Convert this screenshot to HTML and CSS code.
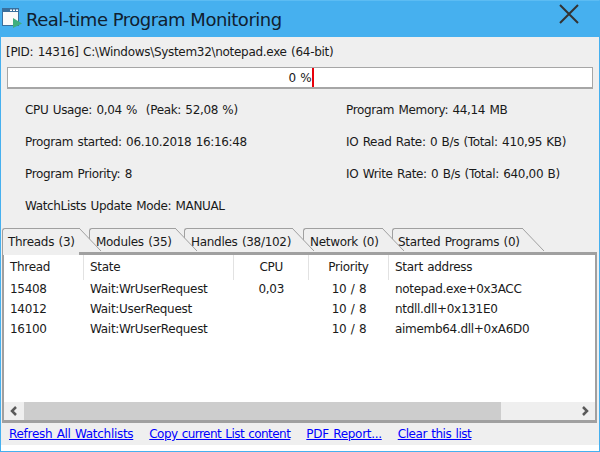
FILE: index.html
```html
<!DOCTYPE html>
<html lang="en">
<head>
<meta charset="utf-8">
<title>Real-time Program Monitoring</title>
<link rel="stylesheet" href="styles.css">
</head>
<body>
<div class="window">
  <header class="titlebar">
    <svg class="app-icon" width="22" height="22" viewBox="0 0 22 22">
      <rect x="1" y="0" width="17" height="18" fill="#3a6f9c"/>
      <rect x="2" y="4" width="15" height="13" fill="#fafafa"/>
      <rect x="9" y="1.500" width="2" height="1.500" fill="#fff"/>
      <rect x="12" y="1.500" width="2" height="1.500" fill="#fff"/>
      <rect x="15" y="1.500" width="2" height="1.500" fill="#fff"/>
      <path d="M12 10 L21 15.500 L12 20 Z" fill="#3fae7f"/>
    </svg>
    <h1 class="title">Real-time Program Monitoring</h1>
    <svg class="close" width="20" height="20" viewBox="0 0 20 20">
      <path d="M1 1 L19 19 M19 1 L1 19" stroke="#333" stroke-width="2" fill="none"/>
    </svg>
  </header>
  <main class="content">
    <div class="pid">[PID: 14316] C:\Windows\System32\notepad.exe (64-bit)</div>
    <div class="progress">
      <span>0 %</span>
      <i class="peak" style="left:52.08%"></i>
    </div>
    <div class="info">
      <div>CPU Usage: 0,04 %&nbsp; (Peak: 52,08 %)</div>
      <div>Program Memory: 44,14 MB</div>
      <div>Program started: 06.10.2018 16:16:48</div>
      <div>IO Read Rate: 0 B/s (Total: 410,95 KB)</div>
      <div>Program Priority: 8</div>
      <div>IO Write Rate: 0 B/s (Total: 640,00 B)</div>
      <div>WatchLists Update Mode: MANUAL</div>
    </div>
    <nav class="tabs">
      <div class="tab tab-threads"><span class="tab-label">Threads (3)</span><svg class="slant" width="22" height="24" viewBox="0 0 22 24"><path d="M0 0 L22 23 L22 24 L0 24 Z" fill="#efefef"/><path d="M0 0 L22 23" stroke="#a0a0a0" fill="none"/></svg></div>
      <div class="tab tab-modules"><span class="tab-label">Modules (35)</span><svg class="slant" width="22" height="24" viewBox="0 0 22 24"><path d="M0 0 L22 23 L22 24 L0 24 Z" fill="#efefef"/><path d="M0 0 L22 23" stroke="#a0a0a0" fill="none"/></svg></div>
      <div class="tab tab-handles"><span class="tab-label">Handles (38/102)</span><svg class="slant" width="22" height="24" viewBox="0 0 22 24"><path d="M0 0 L22 23 L22 24 L0 24 Z" fill="#efefef"/><path d="M0 0 L22 23" stroke="#a0a0a0" fill="none"/></svg></div>
      <div class="tab tab-network"><span class="tab-label">Network (0)</span><svg class="slant" width="22" height="24" viewBox="0 0 22 24"><path d="M0 0 L22 23 L22 24 L0 24 Z" fill="#efefef"/><path d="M0 0 L22 23" stroke="#a0a0a0" fill="none"/></svg></div>
      <div class="tab tab-started"><span class="tab-label">Started Programs (0)</span><svg class="slant" width="22" height="24" viewBox="0 0 22 24"><path d="M0 0 L22 23 L22 24 L0 24 Z" fill="#efefef"/><path d="M0 0 L22 23" stroke="#a0a0a0" fill="none"/></svg></div>
    </nav>
    <section class="panel">
      <div class="list">
        <div class="row head">
          <div class="c sep">Thread</div>
          <div class="c sep">State</div>
          <div class="c sep num">CPU</div>
          <div class="c sep mid">Priority</div>
          <div class="c">Start address</div>
        </div>
        <div class="row">
          <div class="c">15408</div><div class="c">Wait:WrUserRequest</div><div class="c num">0,03</div><div class="c mid">10 / 8</div><div class="c">notepad.exe+0x3ACC</div>
        </div>
        <div class="row">
          <div class="c">14012</div><div class="c">Wait:UserRequest</div><div class="c num"></div><div class="c mid">10 / 8</div><div class="c">ntdll.dll+0x131E0</div>
        </div>
        <div class="row">
          <div class="c">16100</div><div class="c">Wait:WrUserRequest</div><div class="c num"></div><div class="c mid">10 / 8</div><div class="c">aimemb64.dll+0xA6D0</div>
        </div>
      </div>
      <div class="scrollbar">
        <svg class="arrow" width="20" height="18" viewBox="0 0 20 18"><path d="M12 5 L8 9 L12 13" stroke="#5a5a5a" stroke-width="2.500" fill="none"/></svg>
        <div class="thumb"></div>
        <div class="track-rest"></div>
        <svg class="arrow" width="20" height="18" viewBox="0 0 20 18"><path d="M8 5 L12 9 L8 13" stroke="#5a5a5a" stroke-width="2.500" fill="none"/></svg>
      </div>
    </section>
    <div class="links">
      <a href="#">Refresh All Watchlists</a>
      <a class="link-tight" href="#">Copy current List content</a>
      <a href="#">PDF Report...</a>
      <a class="link-snug" href="#">Clear this list</a>
    </div>
    <div class="foot"></div>
  </main>
</div>
</body>
</html>
```
FILE: styles.css
```css
* { box-sizing: border-box; }
html, body { margin: 0; padding: 0; }
body {
  width: 600px;
  height: 452px;
  overflow: hidden;
  font-family: "DejaVu Sans", sans-serif;
  font-size: 12px;
  letter-spacing: -0.3px;
  word-spacing: 0.9px;
  color: #1a1a1a;
}
.window {
  width: 600px;
  height: 452px;
  display: flex;
  flex-direction: column;
  background: #46b0ef;
  border: 1px solid #46b0ef;
  border-top: 1px solid #5cbcf3;
}
.titlebar {
  height: 36px;
  flex: none;
  display: flex;
  align-items: flex-start;
  padding-left: 0;
}
.app-icon { margin-top: 7px; flex: none; }
.title {
  margin: 7px 0 0 3px;
  font-size: 18px;
  font-weight: 400;
  line-height: 24px;
  letter-spacing: -0.5px;
  word-spacing: 0;
  color: #102030;
}
.close { margin: 3px 20px 0 auto; flex: none; }
.content {
  flex: 1;
  display: flex;
  flex-direction: column;
  background: #efefef;
  min-height: 0;
}
.pid { height: 30px; line-height: 30px; padding-left: 5px; white-space: nowrap; }
.progress {
  position: relative;
  height: 22px;
  margin: 0 6px;
  background: #fff;
  border: 2px solid #a6a6a6;
  border-width: 1px 1px 2px 1px;
  text-align: center;
  line-height: 20px;
}
.peak {
  position: absolute;
  top: 0;
  bottom: 0;
  width: 2px;
  background: #e8000b;
}
.info {
  display: grid;
  grid-template-columns: 321px 1fr;
  grid-auto-rows: 32px;
  padding: 5px 0 0 24px;
  height: 139px;
  line-height: 32px;
  letter-spacing: -0.35px;
  white-space: nowrap;
}
.tabs { display: flex; height: 24px; padding-left: 1px; flex: none; position: relative; z-index: 1; }
.tab { display: flex; height: 24px; flex: none; position: relative; }
.tab-label {
  display: block;
  padding: 3px 0 0 6px;
  line-height: 20px;
  white-space: nowrap;
  border: 1px solid #a0a0a0;
  border-width: 1px 0 0 1px;
  border-radius: 3px 0 0 0;
}
.slant { flex: none; }
.tab-threads { z-index: 5; height: 27px; }
.tab-threads .tab-label { width: 77px; padding-left: 5px; background: #efefef; }
.tab-modules { margin-left: -12px; z-index: 4; }
.tab-modules .tab-label { width: 86px; }
.tab-handles { margin-left: -13px; z-index: 3; }
.tab-handles .tab-label { width: 108px; }
.tab-network { margin-left: -11px; z-index: 2; }
.tab-network .tab-label { width: 79px; }
.tab-started { margin-left: -12px; z-index: 1; }
.tab-started .tab-label { width: 130px; padding-left: 5px; }
.panel {
  flex: none;
  height: 171px;
  margin: 0 2px 0 1px;
  display: flex;
  flex-direction: column;
  border: 2px solid #a0a0a0;
  border-top-width: 3px;
  border-bottom-width: 3px;
  background: #fff;
}
.list { flex: 1; }
.row {
  display: grid;
  grid-template-columns: 80px 150px 75px 80px 1fr;
  height: 20px;
  line-height: 20px;
  white-space: nowrap;
}
.head { height: 24px; line-height: 25px; }
.c { padding-left: 6px; }
.head .sep { border-right: 1px solid #e2e2e2; }
.num { text-align: right; padding: 0 25px 0 0; }
.mid { text-align: center; padding: 0; }
.scrollbar { display: flex; height: 18px; background: #efefef; flex: none; }
.arrow { flex: none; }
.thumb { width: 477px; background: #cdcdcd; }
.track-rest { flex: 1; }
.links {
  flex: none;
  height: 22px;
  display: flex;
  gap: 16px;
  padding-left: 8px;
  line-height: 22px;
}
.links a { color: #0000ff; text-decoration: underline; white-space: nowrap; }
.links .link-tight { letter-spacing: -0.55px; }
.links .link-snug { letter-spacing: -0.45px; }
.foot { flex: 1; background: #fff; }
```
